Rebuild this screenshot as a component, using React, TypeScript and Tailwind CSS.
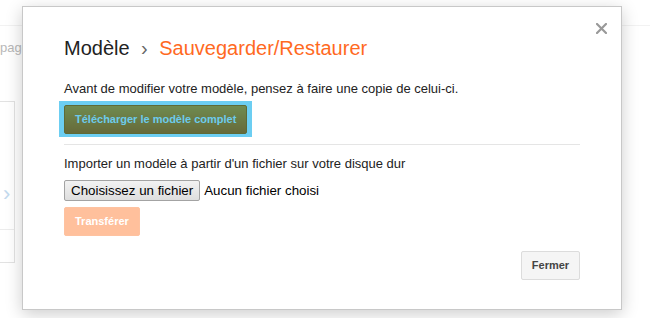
import React from "react";

function CloseIcon() {
  return (
    <svg width="11" height="11" viewBox="0 0 11 11" fill="none">
      <path d="M1 1L10 10M10 1L1 10" stroke="#999999" strokeWidth="2.2" strokeLinecap="square" />
    </svg>
  );
}

function BackgroundPage() {
  return (
    <div className="h-full w-full bg-white">
      {/* header strip */}
      <div className="h-[26px] border-b border-[#f2f2f2]"></div>

      {/* page label, mostly hidden by the dialog */}
      <div className="mt-[14px] text-[13px] leading-[15px] text-[#b8b8b8]">page</div>

      {/* side panel */}
      <div className="mt-[46px] -ml-[10px] w-[25px] h-[162px] border border-[#e2e2e2] flex flex-col">
        <div className="flex-1 flex items-end pl-[12px] pb-[24px]">
          <span className="text-[22px] leading-[22px] text-[#c3daee]">›</span>
        </div>
        <div className="h-[33px] border-t border-[#ececec]"></div>
      </div>
    </div>
  );
}

function BackupDialog() {
  return (
    <div className="absolute left-[22px] top-[6px] w-[600px] h-[304px] bg-white border border-[#c8c8c8] shadow-[0_4px_16px_rgba(0,0,0,0.2)] px-[41px] pt-[30px] flex flex-col">
      <button className="absolute top-[16px] right-[14px]">
        <CloseIcon />
      </button>

      {/* title */}
      <h1 className="flex items-baseline text-[20px] leading-[23px]">
        <span className="text-[#222222]">Modèle</span>
        <span className="mx-[11.5px] text-[#666666]">›</span>
        <span className="text-[#ff6a1f]">Sauvegarder/Restaurer</span>
      </h1>

      {/* backup */}
      <p className="mt-[21px] text-[13px] leading-[15px] text-[#222222]">
        Avant de modifier votre modèle, pensez à faire une copie de celui-ci.
      </p>
      <div className="mt-[5px] flex">
        {/* focus outline */}
        <div className="-ml-[5px] bg-[#6ccef2] px-[5px] pt-[4px] pb-[3px]">
          <button className="block h-[29px] px-[10px] rounded-[2px] border border-[#5e6a37] bg-gradient-to-b from-[#6f8b50] to-[#666a3a] text-[11px] font-bold text-[#6ccbec]">
            Télécharger le modèle complet
          </button>
        </div>
      </div>

      <div className="mt-[7px] h-px bg-[#e5e5e5]"></div>

      {/* restore */}
      <p className="mt-[11px] text-[13px] leading-[15px] text-[#222222]">
        Importer un modèle à partir d'un fichier sur votre disque dur
      </p>
      <div className="mt-[9px] flex items-center text-[13.33px] leading-[16px] text-black">
        <button className="h-[21px] px-[6px] rounded-[2px] border border-[#a3a3a3] bg-gradient-to-b from-[#f2f2f2] to-[#dedede]">
          Choisissez un fichier
        </button>
        <span className="ml-[4px]">Aucun fichier choisi</span>
      </div>
      <div className="mt-[6px] flex">
        <button className="h-[29px] px-[10px] rounded-[2px] border border-[#fec2a0] bg-[#ffc09c] text-[11px] font-bold text-white">
          Transférer
        </button>
      </div>

      {/* footer */}
      <div className="mt-[15px] flex justify-end">
        <button className="h-[29px] w-[59px] rounded-[2px] border border-[#dcdcdc] bg-[#f5f5f5] text-[11px] font-bold text-[#444444]">
          Fermer
        </button>
      </div>
    </div>
  );
}

export default function App() {
  return (
    <div className="relative w-[650px] h-[318px] overflow-hidden bg-white font-['Liberation_Sans',Arial,sans-serif]">
      <BackgroundPage />
      <BackupDialog />
    </div>
  );
}
